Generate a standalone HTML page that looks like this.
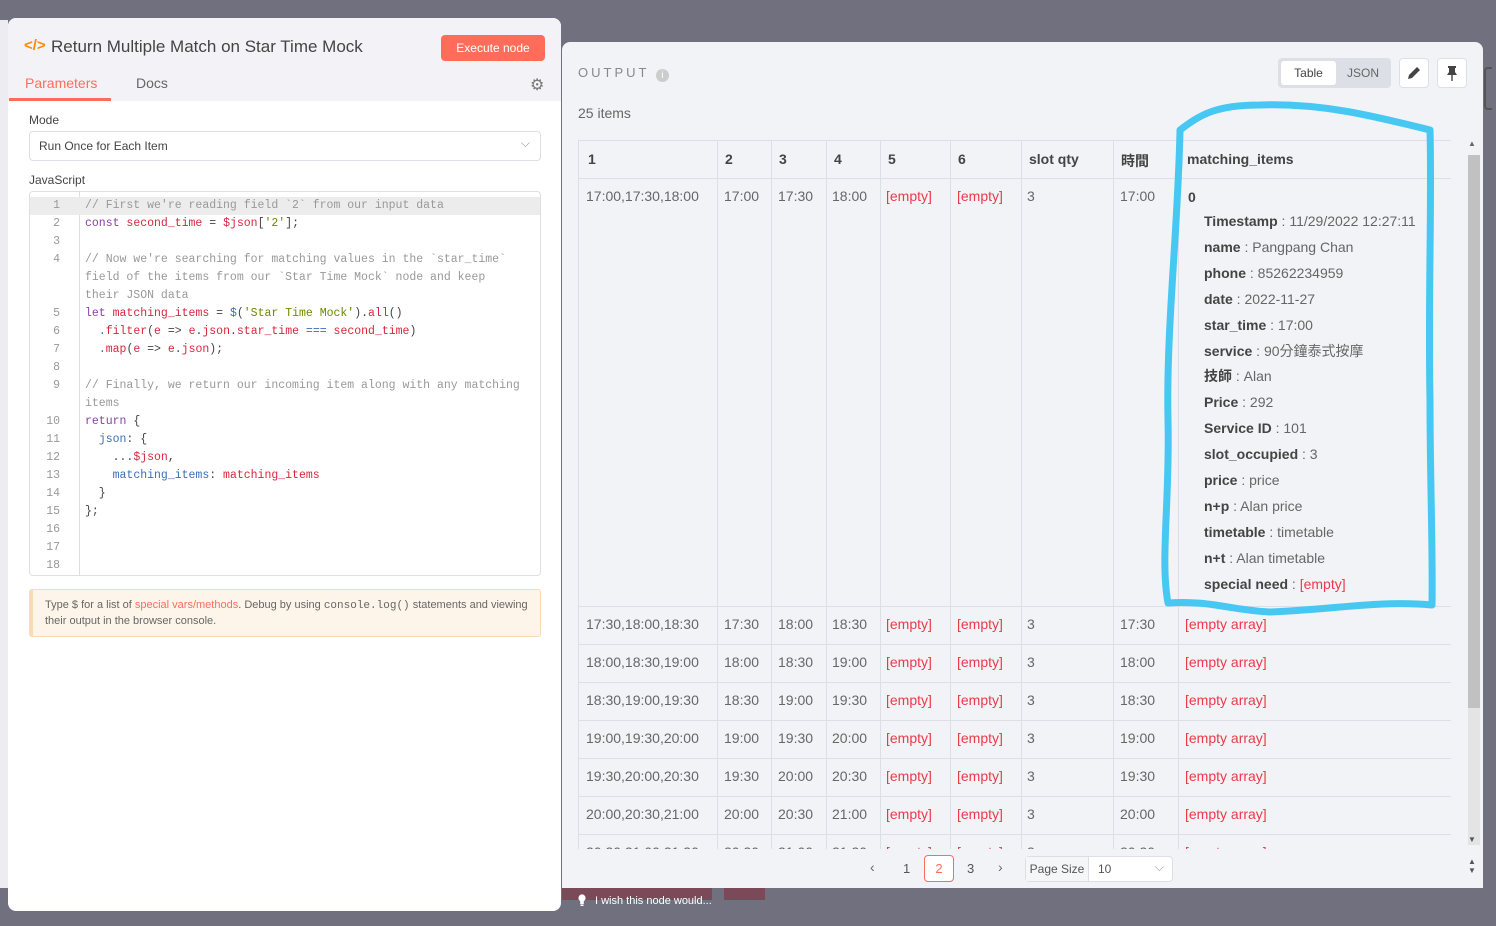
<!DOCTYPE html>
<html><head><meta charset="utf-8"><style>
*{box-sizing:border-box;margin:0;padding:0}
body{width:1496px;height:926px;overflow:hidden;background:#71707f;font-family:"Liberation Sans","Noto Sans CJK TC",sans-serif;position:relative;color:#555}
.a{position:absolute;white-space:nowrap}
#left{left:8px;top:18px;width:553px;height:893px;background:#fff;border-radius:8px;overflow:hidden}
#lhead{position:absolute;left:0;top:0;width:553px;height:83px;background:#f3f3f7}
.code{font-family:"Liberation Mono",monospace;font-size:11.5px;color:#444}
.c{color:#999}.k{color:#8a3fa8}.v{color:#d7263d}.s{color:#6b8a00}.p{color:#3c6eb4}
#out{left:562px;top:42px;width:921px;height:846px;background:#f2f3f7;border-radius:8px 8px 0 0;overflow:hidden}
.cell{position:absolute;font-size:14px;color:#666}
.h{font-weight:bold;color:#444}
.red{color:#ea3a4a}
.vl{position:absolute;width:1px;background:#dcdfe6}
.hl{position:absolute;height:1px;background:#dcdfe6}
</style></head><body>
<div class="a" style="left:0;top:20px;width:8px;height:868px;background:#ededf1"></div>
<div class="a" style="left:1484px;top:67px;width:8px;height:43px;border:2px solid #555;border-right:none;border-radius:4px 0 0 4px"></div>
<div class="a" style="left:562px;top:888px;width:150px;height:12px;background:#7a4a58"></div>
<div class="a" style="left:724px;top:888px;width:41px;height:12px;background:#7a4a58"></div>
<svg class="a" style="left:578px;top:894px" width="8" height="13" viewBox="0 0 8 13"><circle cx="4" cy="4" r="3.6" fill="#fff"/><rect x="2.2" y="6" width="3.6" height="4" fill="#fff"/><rect x="2.5" y="10.5" width="3" height="1.5" fill="#fff"/></svg>
<div class="a" style="left:595px;top:895px;font-size:11px;color:#fff">I wish this node would...</div>

<div id="left" class="a">
 <div id="lhead"></div>
 <div class="a" style="left:16px;top:19px;color:#ff8a00;font-weight:bold;font-size:15px">&lt;/&gt;</div>
 <div class="a" style="left:43px;top:19px;font-size:17px;color:#444">Return Multiple Match on Star Time Mock</div>
 <div class="a" style="left:433px;top:17px;width:104px;height:26px;background:#ff6d5a;border-radius:4px;color:#fff;font-size:12px;text-align:center;line-height:26px">Execute node</div>
 <div class="a" style="left:17px;top:57px;font-size:14px;color:#ff6d5a">Parameters</div>
 <div class="a" style="left:1px;top:80px;width:102px;height:3px;background:#ff6d5a"></div>
 <div class="a" style="left:128px;top:57px;font-size:14px;color:#666">Docs</div>
 <div class="a" style="left:522px;top:57px;font-size:16px;color:#777">⚙</div>
 <div class="a" style="left:21px;top:95px;font-size:12px;color:#444">Mode</div>
 <div class="a" style="left:21px;top:113px;width:512px;height:30px;border:1px solid #dcdfe6;border-radius:4px;font-size:12px;color:#444;padding:7px 9px">Run Once for Each Item<span style="position:absolute;right:10px;top:4px;color:#999">⌵</span></div>
 <div class="a" style="left:21px;top:155px;font-size:12px;color:#444">JavaScript</div>
 <div class="a" style="left:21px;top:173px;width:512px;height:385px;border:1px solid #dcdfe6;border-radius:4px;overflow:hidden">
  <div class="a" style="left:0;top:0;width:50px;height:386px;border-right:1px solid #dcdfe6;background:#fff"></div>
  <div class="a" style="left:0;top:5px;width:512px;height:18px;background:#ececec"></div>
  <div class="a code" style="left:0;top:5px;width:30px;text-align:right;line-height:18px;color:#999">1<br>2<br>3<br>4<br><br><br>5<br>6<br>7<br>8<br>9<br><br>10<br>11<br>12<br>13<br>14<br>15<br>16<br>17<br>18</div>
  <div class="a code" style="left:55px;top:5px;line-height:18px"><span class="c">// First we're reading field `2` from our input data</span><br><span class="k">const</span> <span class="v">second_time</span> = <span class="v">$json</span>[<span class="s">'2'</span>];<br><br><span class="c">// Now we're searching for matching values in the `star_time`</span><br><span class="c">field of the items from our `Star Time Mock` node and keep</span><br><span class="c">their JSON data</span><br><span class="k">let</span> <span class="v">matching_items</span> = <span class="p">$</span>(<span class="s">'Star Time Mock'</span>).<span class="v">all</span>()<br>&nbsp;&nbsp;<span class="p">.</span><span class="v">filter</span>(<span class="v">e</span> =&gt; <span class="v">e</span>.<span class="v">json</span>.<span class="v">star_time</span> <span class="p">===</span> <span class="v">second_time</span>)<br>&nbsp;&nbsp;<span class="p">.</span><span class="v">map</span>(<span class="v">e</span> =&gt; <span class="v">e</span>.<span class="v">json</span>);<br><br><span class="c">// Finally, we return our incoming item along with any matching</span><br><span class="c">items</span><br><span class="k">return</span> {<br>&nbsp;&nbsp;<span class="p">json</span>: {<br>&nbsp;&nbsp;&nbsp;&nbsp;...<span class="v">$json</span>,<br>&nbsp;&nbsp;&nbsp;&nbsp;<span class="p">matching_items</span>: <span class="v">matching_items</span><br>&nbsp;&nbsp;}<br>};</div>
 </div>
 <div class="a" style="left:21px;top:571px;width:512px;height:48px;background:#fdf5ea;border:1px solid #f5dcb5;border-left:4px solid #f5dcb5;border-radius:3px;font-size:11px;color:#666;padding:8px 12px;line-height:15px;white-space:normal">Type $ for a list of <span style="color:#ff6d5a">special vars/methods</span>. Debug by using <span style="font-family:'Liberation Mono',monospace">console.log()</span> statements and viewing their output in the browser console.</div>
</div>

<div id="out" class="a">
 <div class="a" style="left:16px;top:23px;font-size:13px;letter-spacing:3px;color:#888">OUTPUT <span style="display:inline-block;width:13px;height:13px;border-radius:50%;background:#ccc;color:#fff;font-size:10px;letter-spacing:0;text-align:center;line-height:13px;vertical-align:-1px">i</span></div>
 <div class="a" style="left:16px;top:63px;font-size:14px;color:#666">25 items</div>
 <div class="a" style="left:716px;top:16px;width:113px;height:30px;background:#dcdfe6;border-radius:4px"></div>
 <div class="a" style="left:719px;top:19px;width:55px;height:24px;background:#fff;border-radius:3px;font-size:12px;color:#444;text-align:center;line-height:24px">Table</div>
 <div class="a" style="left:785px;top:24px;font-size:12px;color:#666">JSON</div>
 <div class="a" style="left:837px;top:16px;width:30px;height:30px;background:#fff;border:1px solid #dcdfe6;border-radius:4px"><svg width="28" height="28" viewBox="0 0 28 28"><path d="M8 20 L9 16 L17 8 L20 11 L12 19 Z" fill="#444"/></svg></div>
 <div class="a" style="left:875px;top:16px;width:30px;height:30px;background:#fff;border:1px solid #dcdfe6;border-radius:4px"><svg width="28" height="28" viewBox="0 0 28 28"><path d="M10 7 H18 V9 H17 V13 L19 16 H9 L11 13 V9 H10 Z M13.3 16 H14.7 V22 H13.3 Z" fill="#444"/></svg></div>
 <div class="a" style="left:906px;top:113px;width:12px;height:690px;background:#e4e4e4"></div>
 <div class="a" style="left:906px;top:113px;width:12px;height:553px;background:#c1c1c1"></div>
 <div class="a" style="left:906px;top:97px;font-size:8px;color:#666">▲</div>
 <div class="a" style="left:906px;top:793px;font-size:8px;color:#555">▼</div>
 <div class="a" style="left:906px;top:815px;font-size:8px;color:#555">▲<br>▼</div>
</div>
<div id="t" class="a" style="left:578px;top:140px;width:873px;height:709px;overflow:hidden;border-left:1px solid #dcdfe6">
 <div class="hl" style="left:0;top:0;width:873px"></div>
 <div class="hl" style="left:0;top:38px;width:873px"></div>
 <div class="hl" style="left:0;top:466px;width:873px"></div>
 <div class="hl" style="left:0;top:504px;width:873px"></div>
 <div class="hl" style="left:0;top:542px;width:873px"></div>
 <div class="hl" style="left:0;top:580px;width:873px"></div>
 <div class="hl" style="left:0;top:618px;width:873px"></div>
 <div class="hl" style="left:0;top:656px;width:873px"></div>
 <div class="hl" style="left:0;top:694px;width:873px"></div>
 <div class="vl" style="left:138px;top:0;height:709px"></div>
 <div class="vl" style="left:192px;top:0;height:709px"></div>
 <div class="vl" style="left:247px;top:0;height:709px"></div>
 <div class="vl" style="left:301px;top:0;height:709px"></div>
 <div class="vl" style="left:371px;top:0;height:709px"></div>
 <div class="vl" style="left:442px;top:0;height:709px"></div>
 <div class="vl" style="left:534px;top:0;height:709px"></div>
 <div class="vl" style="left:599px;top:0;height:709px"></div>
 <div class="vl" style="left:872px;top:0;height:709px"></div>
 <div class="cell h" style="left:9px;top:11px">1</div>
 <div class="cell h" style="left:146px;top:11px">2</div>
 <div class="cell h" style="left:200px;top:11px">3</div>
 <div class="cell h" style="left:255px;top:11px">4</div>
 <div class="cell h" style="left:309px;top:11px">5</div>
 <div class="cell h" style="left:379px;top:11px">6</div>
 <div class="cell h" style="left:450px;top:11px">slot qty</div>
 <div class="cell h" style="left:542px;top:11px">時間</div>
 <div class="cell h" style="left:608px;top:11px">matching_items</div>
 <div id="rows"></div>
 <div class="cell h" style="left:609px;top:49px">0</div>
 <div class="cell" style="left:625px;top:69px;line-height:25.9px"><b class="h">Timestamp</b> : 11/29/2022 12:27:11<br><b class="h">name</b> : Pangpang Chan<br><b class="h">phone</b> : 85262234959<br><b class="h">date</b> : 2022-11-27<br><b class="h">star_time</b> : 17:00<br><b class="h">service</b> : 90分鐘泰式按摩<br><b class="h">技師</b> : Alan<br><b class="h">Price</b> : 292<br><b class="h">Service ID</b> : 101<br><b class="h">slot_occupied</b> : 3<br><b class="h">price</b> : price<br><b class="h">n+p</b> : Alan price<br><b class="h">timetable</b> : timetable<br><b class="h">n+t</b> : Alan timetable<br><b class="h">special need</b> : <span class="red">[empty]</span></div>
</div>
<script>
var r=[["17:00,17:30,18:00","17:00","17:30","18:00","17:00",48],["17:30,18:00,18:30","17:30","18:00","18:30","17:30",476],["18:00,18:30,19:00","18:00","18:30","19:00","18:00",514],["18:30,19:00,19:30","18:30","19:00","19:30","18:30",552],["19:00,19:30,20:00","19:00","19:30","20:00","19:00",590],["19:30,20:00,20:30","19:30","20:00","20:30","19:30",628],["20:00,20:30,21:00","20:00","20:30","21:00","20:00",666],["20:30,21:00,21:30","20:30","21:00","21:30","20:30",704]];
var h="";r.forEach(function(a,i){var y=a[5];var c=[[7,a[0]],[145,a[1]],[199,a[2]],[253,a[3]],[307,'<span class="red">[empty]</span>'],[378,'<span class="red">[empty]</span>'],[448,"3"],[541,a[4]]];
c.forEach(function(x){h+='<div class="cell" style="left:'+x[0]+'px;top:'+y+'px">'+x[1]+'</div>'});
if(i>0)h+='<div class="cell red" style="left:606px;top:'+y+'px">[empty array]</div>';});
document.getElementById('rows').outerHTML=h;
</script>
<div class="a" style="left:562px;top:849px;width:906px;height:39px;background:#f2f3f7"></div>
<div class="a" style="left:870px;top:859px;font-size:14px;color:#666">‹</div>
<div class="a" style="left:903px;top:861px;font-size:13px;color:#555">1</div>
<div class="a" style="left:924px;top:855px;width:30px;height:27px;border:1px solid #ff6d5a;border-radius:4px;color:#ff6d5a;font-size:13px;text-align:center;line-height:25px;background:#fff">2</div>
<div class="a" style="left:967px;top:861px;font-size:13px;color:#555">3</div>
<div class="a" style="left:998px;top:859px;font-size:14px;color:#666">›</div>
<div class="a" style="left:1025px;top:856px;width:148px;height:26px;border:1px solid #dcdfe6;border-radius:4px;background:#fff;font-size:12px;color:#555"><span style="position:absolute;left:0;top:0;width:63px;height:24px;background:#f5f6f8;border-right:1px solid #dcdfe6;line-height:24px;text-align:center">Page Size</span><span style="position:absolute;left:72px;top:5px">10</span><span style="position:absolute;right:8px;top:3px;color:#999">⌵</span></div>

<svg class="a" style="left:1150px;top:90px" width="300" height="540" viewBox="1150 90 300 540">
<path d="M1180 130 C1200 115 1215 105 1260 105 C1320 103 1370 115 1430 130 C1432 200 1428 300 1430 400 C1430 480 1433 550 1432 605 C1380 600 1330 610 1270 612 C1230 610 1210 600 1168 603 C1160 560 1170 500 1168 420 C1166 330 1178 230 1180 130 Z" fill="none" stroke="#46c8f2" stroke-width="7" stroke-linejoin="round"/>
</svg>
</body></html>
